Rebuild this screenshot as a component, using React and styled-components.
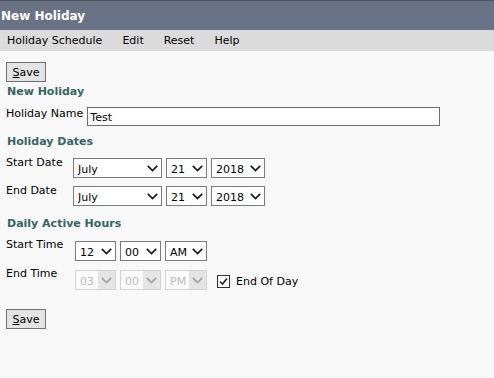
import React from "react";
import styled, { createGlobalStyle } from "styled-components";

const GlobalStyle = createGlobalStyle`
  html, body {
    margin: 0;
    padding: 0;
    background: #f8f8f8;
  }
  body {
    font-family: "DejaVu Sans", Verdana, sans-serif;
    font-size: 11px;
    color: #000;
  }
`;

const Page = styled.div`
  width: 494px;
  height: 378px;
  background: #f8f8f8;
  overflow: hidden;
`;

const TitleBar = styled.div`
  height: 30px;
  box-sizing: border-box;
  border-top: 1px solid #505560;
  background: #6a7386;
  color: #fff;
  font-weight: bold;
  font-size: 12px;
  display: flex;
  align-items: center;
  padding-left: 1px;
  padding-top: 1px;
`;

const MenuBar = styled.div`
  height: 21px;
  background: #dbdbdb;
  display: flex;
  align-items: center;
  gap: 20px;
  padding-left: 7px;
`;

const MenuItem = styled.span`
  color: #000;
`;

const Content = styled.div`
  padding: 11px 6px 0 6px;
`;

const Button = styled.button`
  height: 20px;
  width: 40px;
  padding: 0;
  font-family: inherit;
  font-size: 11px;
  color: #000;
  background: #e3e3e3;
  border: 1px solid #707070;
  border-radius: 0;
  margin-top: ${(p) => p.$top || 0}px;
  display: block;
  u {
    text-decoration: underline;
  }
`;

const Heading = styled.div`
  color: #336666;
  font-weight: bold;
  font-size: 11px;
  line-height: 13px;
  margin-top: ${(p) => p.$top || 0}px;
  padding-left: 1px;
`;

const Row = styled.div`
  display: flex;
  align-items: flex-start;
  margin-top: ${(p) => p.$top || 0}px;
`;

const Label = styled.div`
  width: ${(p) => (p.$width ? `${p.$width}px` : "auto")};
  margin-right: ${(p) => p.$gap || 0}px;
  line-height: 14px;
  white-space: nowrap;
  flex: none;
`;

const Controls = styled.div`
  display: flex;
  align-items: center;
  gap: 4px;
  padding-top: ${(p) => p.$pad || 0}px;
`;

const TextInput = styled.input`
  box-sizing: border-box;
  width: 353px;
  height: 19px;
  border: 1px solid #6e6e6e;
  background: #fff;
  font-family: inherit;
  font-size: 11px;
  padding: 2px 2px 0 2px;
  margin: 0;
  color: #000;
  outline: none;
`;

const SelectWrap = styled.div`
  position: relative;
  width: ${(p) => p.$width}px;
  height: 20px;
  flex: none;
`;

const NativeSelect = styled.select`
  appearance: none;
  -webkit-appearance: none;
  box-sizing: border-box;
  width: 100%;
  height: 100%;
  margin: 0;
  padding: 3px 0 0 4px;
  font-family: inherit;
  font-size: 11px;
  color: #000;
  background: #fff;
  border: 1px solid #7a7a7a;
  border-radius: 0;
  outline: none;
  &:disabled {
    color: #a6a6a6;
    border-color: #c4c4c4;
    background: #fbfbfb;
  }
`;

const Arrow = styled.span`
  position: absolute;
  top: 1px;
  right: 1px;
  bottom: 1px;
  width: 17px;
  display: flex;
  align-items: center;
  justify-content: center;
  pointer-events: none;
  background: ${(p) => (p.$disabled ? "#e4e4e4" : "transparent")};
`;

const CheckLabel = styled.label`
  display: flex;
  align-items: center;
  gap: 6px;
  margin-left: 6px;
  padding-top: 2px;
`;

const CheckBox = styled.span`
  box-sizing: border-box;
  width: 13px;
  height: 13px;
  border: 1px solid #333;
  background: #fff;
  display: flex;
  align-items: center;
  justify-content: center;
`;

function Chevron({ disabled }) {
  return (
    <svg width="11" height="7" viewBox="0 0 11 7">
      <path
        d="M0.8 0.8 L5.5 5.6 L10.2 0.8"
        fill="none"
        stroke={disabled ? "#a0a0a0" : "#1a1a1a"}
        strokeWidth="1.7"
      />
    </svg>
  );
}

function Select({ width, value, options, disabled }) {
  return (
    <SelectWrap $width={width}>
      <NativeSelect defaultValue={value} disabled={disabled}>
        {options.map((o) => (
          <option key={o} value={o}>
            {o}
          </option>
        ))}
      </NativeSelect>
      <Arrow $disabled={disabled}>
        <Chevron disabled={disabled} />
      </Arrow>
    </SelectWrap>
  );
}

const months = [
  "January", "February", "March", "April", "May", "June",
  "July", "August", "September", "October", "November", "December",
];
const days = Array.from({ length: 31 }, (_, i) => String(i + 1));
const years = ["2017", "2018", "2019", "2020"];
const hours = Array.from({ length: 12 }, (_, i) => String(i + 1).padStart(2, "0"));
const mins = ["00", "15", "30", "45"];

function DateRow({ label, top }) {
  return (
    <Row $top={top}>
      <Label $width={67}>{label}</Label>
      <Controls $pad={2}>
        <Select width={89} value="July" options={months} />
        <Select width={41} value="21" options={days} />
        <Select width={54} value="2018" options={years} />
      </Controls>
    </Row>
  );
}

export default function App() {
  return (
    <Page>
      <GlobalStyle />
      <TitleBar>New Holiday</TitleBar>
      <MenuBar>
        <MenuItem>Holiday Schedule</MenuItem>
        <MenuItem>Edit</MenuItem>
        <MenuItem>Reset</MenuItem>
        <MenuItem>Help</MenuItem>
      </MenuBar>
      <Content>
        <Button>
          <u>S</u>ave
        </Button>
        <Heading $top={3}>New Holiday</Heading>
        <Row $top={9}>
          <Label $gap={4}>Holiday Name</Label>
          <Controls>
            <TextInput defaultValue="Test" />
          </Controls>
        </Row>
        <Heading $top={9}>Holiday Dates</Heading>
        <DateRow label="Start Date" top={8} />
        <DateRow label="End Date" top={6} />
        <Heading $top={11}>Daily Active Hours</Heading>
        <Row $top={8}>
          <Label $width={69}>Start Time</Label>
          <Controls $pad={3}>
            <Select width={41} value="12" options={hours} />
            <Select width={41} value="00" options={mins} />
            <Select width={42} value="AM" options={["AM", "PM"]} />
          </Controls>
        </Row>
        <Row $top={6}>
          <Label $width={69}>End Time</Label>
          <Controls $pad={3}>
            <Select width={41} value="03" options={hours} disabled />
            <Select width={41} value="00" options={mins} disabled />
            <Select width={42} value="PM" options={["AM", "PM"]} disabled />
            <CheckLabel>
              <CheckBox>
                <svg width="9" height="9" viewBox="0 0 9 9">
                  <path d="M1 4.5 L3.5 7 L8 1.5" fill="none" stroke="#222" strokeWidth="1.6" />
                </svg>
              </CheckBox>
              End Of Day
            </CheckLabel>
          </Controls>
        </Row>
        <Button $top={19}>
          <u>S</u>ave
        </Button>
      </Content>
    </Page>
  );
}
